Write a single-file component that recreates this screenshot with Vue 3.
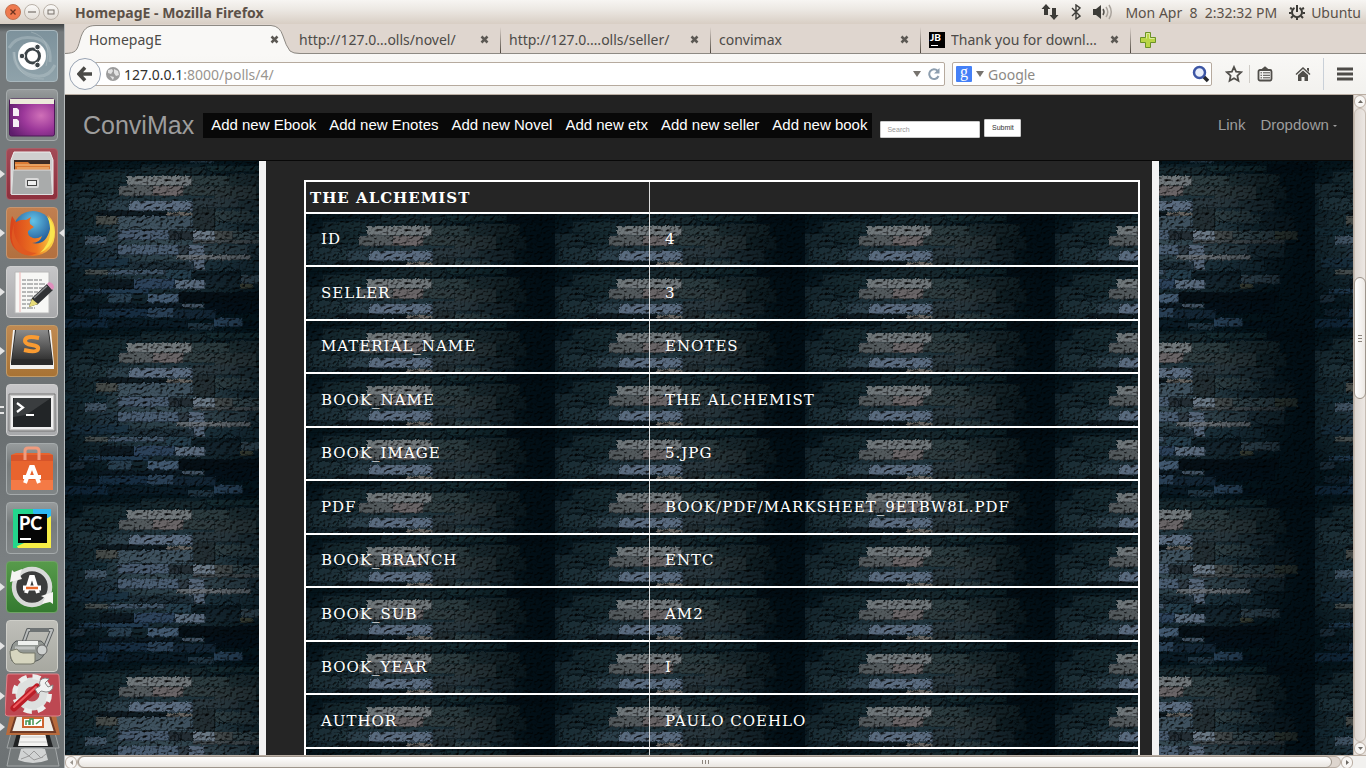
<script setup>
const tabs = [
  { title: 'HomepagE', active: true },
  { title: 'http://127.0…olls/novel/' },
  { title: 'http://127.0.…olls/seller/' },
  { title: 'convimax' },
  { title: 'Thank you for downl…', icon: true },
]

const links = ['Add new Ebook', 'Add new Enotes', 'Add new Novel', 'Add new etx', 'Add new seller', 'Add new book']

const rows = [
  ['ID', '4'],
  ['SELLER', '3'],
  ['MATERIAL_NAME', 'ENOTES'],
  ['BOOK_NAME', 'THE ALCHEMIST'],
  ['BOOK_IMAGE', '5.JPG'],
  ['PDF', 'BOOK/PDF/MARKSHEET_9ETBW8L.PDF'],
  ['BOOK_BRANCH', 'ENTC'],
  ['BOOK_SUB', 'AM2'],
  ['BOOK_YEAR', 'I'],
  ['AUTHOR', 'PAULO COEHLO'],
  ['', ''],
]

// Stones of the wall tile: x, y, width, height, colour
const stones = [
  [0, 0, 76, 5, '#06141a'], [76, 3, 66, 8, '#16262b'], [142, 2, 60, 6, '#14282d'], [202, 0, 48, 9, '#030d13'],
  [18, 8, 44, 11, '#16282e'], [62, 12, 65, 10, '#73787a'], [127, 12, 38, 10, '#2c393c'], [165, 10, 50, 13, '#1d2b2f'],
  [0, 20, 30, 14, '#1a2c33'], [30, 18, 24, 12, '#14262c'], [54, 22, 34, 10, '#55585b'], [88, 22, 30, 10, '#6c6465'], [118, 22, 32, 10, '#2f393c'],
  [150, 22, 42, 14, '#2b3638'], [192, 22, 30, 14, '#162428'],
  [4, 34, 38, 13, '#20323a'], [42, 37, 23, 10, '#293b45'], [65, 37, 63, 10, '#5a6a7e'], [128, 34, 46, 10, '#28343a'], [174, 36, 36, 12, '#1e2d32'],
  [33, 47, 69, 5, '#0a141a'], [102, 48, 26, 4, '#67625d'], [128, 44, 22, 22, '#20292d'], [150, 47, 36, 11, '#2b393d'],
  [3, 52, 9, 11, '#15252b'], [14, 51, 15, 12, '#18292f'], [31, 52, 22, 9, '#484a46'], [53, 52, 75, 14, '#3b4c58'], [166, 50, 30, 10, '#24343a'], [196, 52, 34, 14, '#132127'],
  [0, 64, 42, 8, '#142a34'], [20, 72, 22, 9, '#445666'], [53, 66, 51, 10, '#45566a'], [104, 67, 24, 9, '#20272d'], [128, 67, 22, 9, '#6a7583'], [150, 67, 18, 9, '#434746'],
  [168, 67, 42, 9, '#36454a'], [210, 67, 23, 9, '#434639'], [128, 76, 92, 4, '#42474a'],
  [32, 81, 21, 14, '#1e303c'], [53, 81, 61, 10, '#46586c'], [114, 81, 10, 10, '#29343c'], [124, 81, 16, 25, '#536274'], [140, 81, 45, 10, '#2a3a42'], [185, 80, 35, 14, '#1b2c34'],
  [111, 91, 75, 5, '#62666b'], [65, 97, 64, 9, '#1a2933'], [6, 94, 58, 10, '#182d3c'], [140, 97, 60, 11, '#162932'],
  [20, 106, 23, 5, '#4a504f'], [43, 106, 58, 5, '#405164'], [101, 106, 26, 9, '#223847'], [127, 107, 49, 12, '#0b171e'],
  [34, 115, 35, 10, '#0b151c'], [69, 115, 41, 10, '#2b4058'], [110, 116, 30, 9, '#5b6a7d'], [140, 112, 36, 12, '#13222a'], [176, 111, 39, 9, '#354550'], [175, 120, 13, 5, '#3f4132'],
  [14, 125, 70, 5, '#20374c'], [5, 131, 15, 8, '#1d2d38'], [43, 130, 24, 9, '#283d4e'], [83, 130, 31, 9, '#435870'], [114, 128, 100, 11, '#040c12'],
  [34, 140, 84, 4, '#0b1620'], [118, 140, 21, 4, '#435160'], [140, 138, 70, 12, '#030e16'],
  [10, 145, 24, 8, '#10202c'], [34, 145, 49, 9, '#162b40'], [83, 144, 26, 10, '#2a3f55'], [109, 146, 42, 9, '#132532'],
  [0, 155, 43, 9, '#12273a'], [43, 156, 80, 8, '#0a1a25'], [123, 159, 26, 7, '#203240'], [149, 154, 29, 9, '#284056'], [178, 158, 60, 6, '#03111a'],
]

const cracks = 'M4 36q6 4 3 9M12 35q8-5 18-2t6 8M30 46l6-9M136 4l20 7 12-2M150 52l14 8 10-2M190 54l12 10M168 75l12-8 14 7M108 69q6-2 6 4t-5 2M116 75v-7M40 86l14 6M70 99l10 5 12-6 14 6 12-5M150 112l14-10 12 8M200 22l16 10M20 26l20 4M186 88l14 8 20-2M205 158q10 8 14-6M222 47q8 3 4 8'

const wallSvg = `<svg xmlns="http://www.w3.org/2000/svg" width="250" height="167">
<defs>
<radialGradient id="g" gradientUnits="userSpaceOnUse" cx="0" cy="0" r="1" gradientTransform="translate(98 72) scale(140 88)"><stop offset="0" stop-color="#34464f"/><stop offset=".5" stop-color="#1b2d35"/><stop offset="1" stop-color="#04131a"/></radialGradient>
<linearGradient id="s"><stop offset="0" stop-color="#000a10" stop-opacity=".25"/><stop offset=".2" stop-color="#000a10" stop-opacity="0"/><stop offset=".6" stop-color="#000a10" stop-opacity="0"/><stop offset="1" stop-color="#000a10" stop-opacity=".75"/></linearGradient>
<filter id="r" x="0" y="0" width="100%" height="100%" color-interpolation-filters="sRGB"><feTurbulence type="fractalNoise" baseFrequency=".3 .36" numOctaves="4" seed="7" result="n"/><feDiffuseLighting in="n" surfaceScale="3" diffuseConstant="1.3" lighting-color="#fff" result="l"><feDistantLight azimuth="235" elevation="55"/></feDiffuseLighting><feDisplacementMap in="SourceGraphic" in2="n" scale="3" xChannelSelector="R" yChannelSelector="G" result="d"/><feComposite in="d" in2="l" operator="arithmetic" k1="1.1" k2="0" k3="0" k4="0" result="c"/><feMerge><feMergeNode in="SourceGraphic"/><feMergeNode in="c"/></feMerge></filter>
</defs>
<g filter="url(#r)"><rect width="250" height="167" fill="url(#g)"/>
${stones.map(([x, y, w, h, c]) => `<rect x="${x}" y="${y}" width="${w}" height="${h}" fill="${c}" fill-opacity=".85"/><path d="M${x} ${y + h - 0.5}h${w - 0.5}v-${h}" fill="none" stroke="#000a10" stroke-opacity=".4"/>`).join('')}
<path d="${cracks}" fill="none" stroke="#020b10" stroke-opacity=".8"/><rect width="250" height="167" fill="url(#s)"/></g></svg>`

const wall = `url("data:image/svg+xml,${encodeURIComponent(wallSvg)}")`
</script>

<template>
  <div class="desktop" :style="{ '--wall': wall }">
    <header class="menubar">
      <div class="wm">
        <button class="wm-btn close" aria-label="Close"><svg width="8" height="8" viewBox="0 0 8 8"><path d="M1.500 1.500l5 5m0-5l-5 5" stroke="#6b3320" stroke-width="1.300" /></svg></button>
        <button class="wm-btn" aria-label="Minimize"><svg width="8" height="8" viewBox="0 0 8 8"><path d="M0 4h8" stroke="#77706a" stroke-width="1.200" /></svg></button>
        <button class="wm-btn" aria-label="Maximize"><svg width="8" height="8" viewBox="0 0 8 8"><rect x="1" y="2" width="6" height="4" fill="none" stroke="#77706a" /></svg></button>
      </div>
      <strong class="win-title">HomepagE - Mozilla Firefox</strong>
      <div class="tray">
        <svg width="18" height="18" viewBox="0 0 18 18" fill="#3c3b37"><path d="M5 1l4.500 5H7v6H3V6H.500zM13 17l-4.500-5H11V5h4v7h2.500z" /></svg>
        <svg class="bt" width="10" height="16" viewBox="0 0 10 16"><path d="M1 4l8 8-4 3V1l4 3-8 8" fill="none" stroke="#3c3b37" stroke-width="1.400" /></svg>
        <svg class="vol" width="20" height="16" viewBox="0 0 20 16"><path d="M0 5h3l5-4v14l-5-4H0z" fill="#3c3b37" /><path d="M10 5q2 3 0 6" fill="none" stroke="#55524d" stroke-width="1.500" /><path d="M13 3q3.500 5 0 10M16 1q4.500 7 0 14" fill="none" stroke="#aaa49d" stroke-width="1.500" /></svg>
        <span class="clock">Mon Apr&nbsp; 8&nbsp; 2:32:32 PM</span>
        <svg width="16" height="16" viewBox="0 0 16 16" fill="none" stroke="#3c3b37"><path d="M5.500 3.800a5 5 0 1 0 5 0" stroke-width="2" /><path d="M8 1v7" stroke-width="2" /><path d="M3 5L1 4M2.500 9H0M4 12l-2 2M8 13.500V16M12 12l2 2M13.500 9H16M13 5l2-1" stroke-width="2" /></svg>
        <span>Ubuntu</span>
      </div>
    </header>

    <div class="workspace">
      <nav class="launcher" aria-label="Launcher">
        <button class="tile t-dash" aria-label="Dash">
          <svg viewBox="0 0 52 52"><g fill="none" stroke="#c6d0d4" stroke-opacity=".35"><path d="M3 18Q10 5 28 8T44 32" stroke-width="3" /><path d="M49 35Q42 50 25 45T8 22" stroke-width="3" /><path d="M25 2q22 6 15 34M8 22q2 28 30 27" /></g><circle cx="26" cy="26" r="14" fill="#fff" /><circle cx="26.500" cy="26" r="7" fill="none" stroke="#3c4448" stroke-width="3" /><g fill="#3c4448" stroke="#fff"><circle cx="16" cy="26" r="2.800" /><circle cx="31.500" cy="17" r="2.800" /><circle cx="31.500" cy="35" r="2.800" /></g></svg>
        </button>
        <button class="tile" aria-label="Desktop">
          <svg viewBox="0 0 52 52"><defs><radialGradient id="pur" cx=".7" cy=".45" r=".8"><stop offset="0" stop-color="#d070b8" /><stop offset=".5" stop-color="#9c389a" /><stop offset="1" stop-color="#5e1d6c" /></radialGradient></defs><rect x="3.500" y="10" width="45" height="37" rx="2" fill="url(#pur)" stroke="#4c1857" /><path d="M4 10h44v5H4z" fill="#eceadb" /><path d="M7 19h4l2 2v6H7zM7 30h4l2 2v6H7z" fill="#f6eef5" /></svg>
        </button>
        <button class="tile t-files" aria-label="Files">
          <i class="pip"></i>
          <svg viewBox="0 0 52 52"><path d="M8 4h36l3 8v34H5V12z" fill="#cfcfcf" stroke="#eee" /><path d="M8 12h36v12H8z" fill="#3d2b25" /><path d="M9 14h13l2 2h20v10H9z" fill="#db7a34" /><path d="M9 17h35M11 20h32" stroke="#f6c489" /><path d="M7 22h38l1.500 24.500h-41z" fill="#a9abab" stroke="#dedede" /><rect x="19" y="30" width="14" height="10" rx="2" fill="#dadada" /><rect x="21.500" y="32.500" width="9" height="5" fill="#eee" stroke="#444" /></svg>
        </button>
        <button class="tile t-fox" aria-label="Firefox">
          <i class="pip"></i><i class="pip right"></i>
          <svg viewBox="0 0 52 52"><defs><radialGradient id="globe" cx=".5" cy=".25" r=".7"><stop offset="0" stop-color="#62c3e8" /><stop offset="1" stop-color="#133f83" /></radialGradient><linearGradient id="fox" x1="0" x2="1"><stop offset="0" stop-color="#d8421b" /><stop offset=".6" stop-color="#ee7722" /><stop offset="1" stop-color="#fbe04a" /></linearGradient></defs><circle cx="27" cy="24" r="20" fill="url(#globe)" /><path d="M6 9l4 6q5-3 10-2l5-3q-2 4-1 7l4 3-6 4q-1 5 5 7 5 1 9-2-2 7-10 7 14 3 18-14 1-7-2-14 7 7 7 17 0 22-22 24Q3 47 4 26 4 16 6 9z" fill="url(#fox)" /><path d="M41 9q8 8 7 20-3 12-14 17 9-9 10-18 1-10-3-19z" fill="#fae64f" /><path d="M9 15q-4 12 5 23 7 8 17 8-12 6-21-4-8-10-1-27z" fill="#e05921" /></svg>
        </button>
        <button class="tile t-light" aria-label="Text Editor">
          <i class="pip"></i>
          <svg viewBox="0 0 52 52"><path d="M9 6h34v41H9z" fill="#f7f7f5" stroke="#b8b8b8" /><path d="M14 6v40" stroke="#efb3b3" /><path d="M16 14h20M16 18h24M16 22h21M16 26h22M16 30h17M16 34h18M16 38h16M16 42h13" stroke="#77797b" stroke-width="1" stroke-dasharray="4 1 6 1" /><path d="M23 41l3-9 15-14 6 6-15 14z" fill="#303234" /><path d="M28 32l13-12" stroke="#898c8e" stroke-width="1.500" /><path d="M23 41l3-8 6 5z" fill="#e8dc79" /><path d="M41 18l2-2q5 1 5 6l-2 2z" fill="#df8fbd" /></svg>
        </button>
        <button class="tile t-sublime" aria-label="Sublime Text">
          <i class="pip"></i>
          <svg viewBox="0 0 52 52"><defs><linearGradient id="key" x1="0" y1="0" x2="0" y2="1"><stop offset="0" stop-color="#8b8b8b" /><stop offset="1" stop-color="#343434" /></linearGradient></defs><path d="M7 5h38l3 34v5H4v-5z" fill="#f3f1ee" /><path d="M9 5h34l4 32v3H5v-3z" fill="#2b2b2b" /><path d="M10 5h32l4 29H6z" fill="url(#key)" /><path d="M33 13q-14-3-14 3 0 3 7 4t6 4q-1 4-14 1" fill="none" stroke="#f99b32" stroke-width="4" /></svg>
        </button>
        <button class="tile t-light" aria-label="Terminal">
          <i class="pip double"></i>
          <svg viewBox="0 0 52 52"><path d="M3 10h46v37H3z" fill="#c8c8c8" stroke="#777" /><path d="M5 12h42v33H5z" fill="#efefef" /><path d="M7 14h38v29H7z" fill="#222527" /><path d="M8 14h37L20 31 7 33z" fill="#3a3d3f" /><path d="M11 19l6 4.500-6 4.500M20 31h8" fill="none" stroke="#fff" stroke-width="2.200" /></svg>
        </button>
        <button class="tile" aria-label="Software Center">
          <svg viewBox="0 0 52 52"><path d="M5 12l5-2h33l4 2v35H5z" fill="#e8642e" /><path d="M5 12h42v6H5z" fill="#d6542a" /><path d="M5 37h42v10H5z" fill="#f47a46" /><path d="M19 17V8q0-3 3-3h8q3 0 3 3v9" fill="none" stroke="#ef9b7e" stroke-width="3" /><path d="M19 40l6-16h2l6 16" fill="none" stroke="#fff" stroke-width="4" /><path d="M17 34h18" stroke="#fff" stroke-width="4" /></svg>
        </button>
        <button class="tile" aria-label="PyCharm">
          <svg viewBox="0 0 52 52"><path d="M7 7h22L19 46H7z" fill="#21d789" /><path d="M27 7h18v22L25 9z" fill="#2eb9f3" /><path d="M45 14v32H12l-5-8z" fill="#f7ee45" /><path d="M7 7h20v30L7 46z" fill="#23d58c" /><path d="M12 12h29v29H12z" fill="#050505" /><path d="M14 36h11v2H14z" fill="#fff" /><text x="13" y="28" font-family="Lato, sans-serif" font-size="18" font-weight="900" fill="#fff">PC</text></svg>
        </button>
        <button class="tile t-green" aria-label="Software Updater">
          <i class="pip"></i>
          <svg viewBox="0 0 52 52"><circle cx="26" cy="26" r="18" fill="#3b3d3d" stroke="#d8dad9" stroke-width="4.500" /><path d="M4 21l12-3-2-4 2-6-8 3-2-2zM47 31l-12 4 4 2-3 6 8-2 3 2z" fill="#f4f4f2" /><path d="M20 32l5-16h2l5 16" fill="none" stroke="#fff" stroke-width="4" /><path d="M17 27h18" stroke="#fff" stroke-width="5" /><path d="M20 27h12" stroke="#e8692c" stroke-width="2.500" /></svg>
        </button>
        <button class="tile t-pale" aria-label="Scanner">
          <i class="pip"></i>
          <svg viewBox="0 0 52 52"><path d="M17 24l5-14h24l-9 22" fill="none" stroke="#5c6061" stroke-width="4" stroke-linejoin="round" /><path d="M17 24l5-14h24l-9 22" fill="none" stroke="#b9bcbc" stroke-width="2" stroke-linejoin="round" /><path d="M24 10h19" stroke="#6e7374" stroke-width="4" /><path d="M10 21h25q6 4 4 11t-9 9l-6 2H8q-5-4-3-14 1-6 5-8z" fill="#929793" stroke="#55595a" /><path d="M12 23h20" stroke="#eef0ee" stroke-width="4" /><path d="M9 28h20" stroke="#c0c3c1" stroke-width="3" /><path d="M4 31l7-2q2 4 6 4h12v8q0 3-4 3H9q-5-4-5-13z" fill="#d6d5bf" stroke="#77796b" /><circle cx="36" cy="30" r="5" fill="#cdd0cf" stroke="#666" /></svg>
        </button>
        <div class="stack">
          <i class="pip"></i><i class="pip lower"></i>
          <svg width="56" height="95" viewBox="0 0 56 95"><path d="M6 73h44l4 20H2z" fill="#74797a" stroke="#a4a8a9" /><path d="M16 76q12-5 24 0l3 11q-15 6-30 0z" fill="#d1d3d3" /><path d="M18 78l6 5 5-5 7 7 5-4M16 86l8-3 5 4 9-3" fill="none" stroke="#999" /><path d="M6 60h44l4 15H2z" fill="#6a6f70" stroke="#9fa3a4" /><path d="M12 60h32l4 14H8z" fill="#202223" /><path d="M16 60h24l3 13H13z" fill="#f4f4f2" /><path d="M15 64h26M14 69h28" stroke="#c8c8c6" /><path d="M5 42h46l4 20H1z" fill="#b86b3d" /><path d="M11 43h34l5 16H6z" fill="#f0ede6" stroke="#703b26" stroke-width="2" /><path d="M18 45h20v9H18z" fill="#fff" stroke="#cd6430" stroke-width="2" /><path d="M21 52v-4h3v4m1 0v-6h3v6m3-1l5-4" stroke="#469553" stroke-width="1.500" fill="none" /><path d="M4 1h48q2 0 2 2l2 37q0 3-3 3H3q-3 0-3-3L2 3q0-2 2-2z" fill="#bd4852" stroke="#df858c" /><circle cx="27" cy="21" r="12" fill="none" stroke="#dde0df" stroke-width="9" /><circle cx="27" cy="21" r="17.500" fill="none" stroke="#eceeed" stroke-width="5" stroke-dasharray="8 5.740" /><path d="M9 35l23-21" stroke="#bb1d27" stroke-width="7" stroke-linecap="round" /><path d="M9 34l22-20" stroke="#f05c61" stroke-width="2" stroke-linecap="round" /><path d="M30 16l5-3q-2-7 5-8l4 1-4 4 3 4 5-2q0 7-7 7l-5-1-3 3z" fill="#f1f2f2" stroke="#888" /></svg>
        </div>
      </nav>

      <main class="browser">
        <div class="tabstrip">
          <div v-for="tab in tabs" :key="tab.title" class="tab" :class="{ active: tab.active }">
            <svg v-if="tab.active" class="tab-shape" viewBox="0 0 235 30" aria-hidden="true"><path d="M0 29.500C11 29 12 27 15 16S22 1.500 31 1.500H206Q215 2 218 12T225 27Q228 29.500 235 29.500V31H0z" fill="#f9f8f6" stroke="#8d8983" /></svg>
            <svg v-if="tab.icon" class="fav" width="16" height="16" viewBox="0 0 16 16"><rect width="16" height="16" /><text x="1" y="9" font-family="Lato, sans-serif" font-weight="900" font-size="10" fill="#fff">JB</text><path d="M2 13.500h7" stroke="#fff" /></svg>
            <a class="tab-title" href="#">{{ tab.title }}</a>
            <button class="tab-close" aria-label="Close tab"><svg width="9" height="9" viewBox="0 0 9 9"><path d="M1.500 1.500l6 6m0-6l-6 6" stroke="#5c5954" stroke-width="2.500" /></svg></button>
          </div>
          <button class="plus" aria-label="New tab"><svg width="16" height="16" viewBox="0 0 16 16"><path d="M5.500.5h5v5h5v5h-5v5h-5v-5h-5v-5h5z" fill="#b9d546" stroke="#6b9226" /><path d="M6.500 6.500v-5h3v5h5" fill="none" stroke="#dcea9b" /></svg></button>
        </div>

        <div class="toolbar">
          <button class="back" aria-label="Back"><svg width="16" height="16" viewBox="0 0 16 16"><path d="M8 1.500L2 8l6 6.500M3 8h12" fill="none" stroke="#4a4946" stroke-width="3.500" /></svg></button>
          <div class="urlbar">
            <svg width="14" height="14" viewBox="0 0 14 14"><circle cx="7" cy="7" r="7" fill="#9c9c9c" /><path d="M2 3l4-1 1 2-2 3-3-1zM8 2l4 2 1 4-3 1-2-3zM4 9l4 1-1 3z" fill="#e3e3e3" /></svg>
            <span class="url"><b>127.0.0.1</b>:8000/polls/4/</span>
            <svg width="8" height="6" viewBox="0 0 8 6"><path d="M0 0h8L4 6z" fill="#77736e" /></svg>
            <svg class="reload" width="12" height="12" viewBox="0 0 12 12"><path d="M9.500 2.800A4.800 4.800 0 1 0 10.500 8" fill="none" stroke="#8d9eaf" stroke-width="2" /><path d="M11.500 0v5.500H6z" fill="#8d9eaf" /></svg>
          </div>
          <div class="searchbar">
            <span class="g-logo">g</span>
            <svg width="8" height="6" viewBox="0 0 8 6"><path d="M0 0h8L4 6z" fill="#77736e" /></svg>
            <input class="engine" type="text" placeholder="Google" aria-label="Google search">
            <svg width="18" height="18" viewBox="0 0 18 18"><path d="M11 11l5 5" stroke="#26282c" stroke-width="3.500" /><circle cx="7.500" cy="7.500" r="5.500" fill="#e9effb" stroke="#3d56a5" stroke-width="2.500" /></svg>
          </div>
          <div class="tools">
            <button aria-label="Bookmark"><svg width="18" height="18" viewBox="0 0 18 18"><path d="M9 2l2.100 4.700 5 .5-3.700 3.500 1 5L9 13.200l-4.400 2.500 1-5L1.900 7.200l5-.5z" fill="none" stroke="#504e4a" stroke-width="1.800" /></svg></button>
            <i class="bar short"></i>
            <button class="list" aria-label="Bookmarks list"><svg width="16" height="16" viewBox="0 0 16 16" fill="none" stroke="#504e4a"><rect x="1.500" y="4" width="13" height="10.500" rx="1.500" stroke-width="1.800" /><path d="M5 4l3-2.500L11 4" stroke-width="2" /><path d="M3.500 6.800h1.500M6 6.800h7M3.500 9.300h1.500M6 9.300h7M3.500 11.800h1.500M6 11.800h7" stroke-width="1" /></svg></button>
            <button class="home" aria-label="Home"><svg width="16" height="16" viewBox="0 0 16 16"><path d="M8 1l7.500 7-1 1L8 3 1.500 9l-1-1zM12 2h2v4l-2-2zM3 9l5-4.500L13 9v6H9.500v-4h-3v4H3z" fill="#504e4a" /></svg></button>
            <i class="bar"></i>
            <button aria-label="Menu"><svg width="16" height="14" viewBox="0 0 16 14"><path d="M0 2h16M0 7h16M0 12h16" stroke="#4d4b48" stroke-width="3" /></svg></button>
          </div>
        </div>

        <div class="view">
          <div class="page">
            <nav class="navbar">
              <a class="brand" href="#">ConviMax</a>
              <div class="links"><a v-for="l in links" :key="l" href="#">{{ l }}</a></div>
              <form class="find" @submit.prevent>
                <input type="text" placeholder="Search" aria-label="Search">
                <button>Submit</button>
              </form>
              <div class="side"><a href="#">Link</a><a href="#">Dropdown <i class="caret"></i></a></div>
            </nav>
            <div class="wall">
              <section class="panel">
                <table>
                  <thead><tr><th>THE ALCHEMIST</th><th></th></tr></thead>
                  <tbody>
                    <tr v-for="row in rows" :key="row[0]"><td>{{ row[0] }}</td><td>{{ row[1] }}</td></tr>
                  </tbody>
                </table>
              </section>
            </div>
          </div>
          <div class="vscroll" aria-hidden="true">
            <span class="cap"><svg width="5" height="3" viewBox="0 0 5 3"><path d="M0 3h5L2.500 0z" fill="#6b6762" /></svg></span>
            <div class="vtrack"><div class="vthumb"><i></i></div></div>
            <span class="cap"><svg width="5" height="3" viewBox="0 0 5 3"><path d="M0 0h5L2.500 3z" fill="#6b6762" /></svg></span>
          </div>
        </div>
        <div class="hscroll" aria-hidden="true">
          <span class="cap"><svg width="3" height="5" viewBox="0 0 3 5"><path d="M3 0v5L0 2.500z" fill="#9b968f" /></svg></span>
          <div class="htrack"><div class="hthumb"><i></i></div></div>
          <span class="cap"><svg width="3" height="5" viewBox="0 0 3 5"><path d="M0 0v5l3-2.500z" fill="#6b6762" /></svg></span>
        </div>
      </main>
    </div>
  </div>
</template>

<style>
body { margin: 0; overflow: hidden; }
</style>

<style scoped>
* { box-sizing: border-box; }
button { padding: 0; border: 0; background: none; font: inherit; color: inherit; }
a { color: inherit; text-decoration: none; }
svg { display: block; flex: none; }
.desktop { height: 100vh; display: flex; flex-direction: column; font-family: "Noto Sans", sans-serif; font-size: 14px; color: #4c4a47; }

.menubar { flex: none; height: 24px; display: flex; align-items: center; padding: 0 5px; background: linear-gradient(#f7f5f2, #ece8e3 40%, #d8cec4); }
.wm { display: flex; gap: 3px; width: 70px; }
.wm-btn { width: 16px; height: 16px; border-radius: 50%; border: 1px solid #b9b1a8; background: linear-gradient(#fbfaf8, #e2dcd5); display: grid; place-items: center; }
.wm-btn.close { background: #ef7a4f; border-color: #c4714f; }
.win-title { font-size: 14px; color: #5c5148; }
.tray { margin-left: auto; display: flex; align-items: center; color: #5a5149; }
.bt { margin-left: 12px; }
.vol { margin-left: 12px; }
.clock { margin: 0 12px; }
.tray span:last-child { margin-left: 6px; }

.workspace { flex: 1; min-height: 0; display: flex; }
.launcher { flex: none; width: 65px; padding: 6px 0 0 6px; display: flex; flex-direction: column; gap: 7px; overflow: hidden; border-right: 1px solid #b7babb; background: linear-gradient(#3f4244, #757a7c 8px, #757a7c 30%, #6a6f71 55%, #7d8284 75%, #6c7173); }
.tile { position: relative; flex: none; width: 52px; height: 52px; border-radius: 4px; border: 1px solid #a5aaab; background: linear-gradient(#979b9c, #757a7b 40%, #808586); }
.tile svg { width: 52px; height: 52px; margin: -1px; }
.t-dash { background: linear-gradient(#7d929c, #8fa2aa); border-color: #a9b8be; }
.t-files { background: linear-gradient(#a34a56, #8d303d); border-color: #a85e67; }
.t-fox { background: linear-gradient(#c17f50, #b2703f); border-color: #c69570; }
.t-sublime { background: linear-gradient(#c08a52, #a87335); border-color: #c39b68; }
.t-light { background: linear-gradient(#c6c6c8, #a8a9ab); border-color: #cecece; }
.t-green { background: linear-gradient(#579a4b, #347a30); border-color: #6fa365; }
.t-pale { background: linear-gradient(#bfbfb9, #a7a8a0); border-color: #ceceC8; }
.pip { position: absolute; left: -7px; top: 21px; border: 4px solid transparent; border-left: 5px solid #e4e4e4; border-right: 0; }
.pip.right { left: auto; right: -7px; border-left: 0; border-right: 5px solid #e4e4e4; }
.pip.double { border: 0; width: 4px; height: 8px; border-top: 2px solid #e4e4e4; border-bottom: 2px solid #e4e4e4; }
.stack { position: relative; flex: none; margin: -6px 0 0 -1px; }
.stack .pip { left: -5px; top: 19px; }
.stack .pip.lower { top: 50px; }

.browser { flex: 1; min-width: 0; display: flex; flex-direction: column; }
.tabstrip { flex: none; height: 30px; display: flex; padding-left: 15px; background: #dfd6cf; border-bottom: 1px solid #8d8983; }
.tab { position: relative; width: 210px; display: flex; align-items: center; padding: 2px 11px 0 9px; color: #4c4a47; }
.tab::after { content: ""; position: absolute; right: -1px; top: 3px; bottom: 0; width: 1px; background: linear-gradient(#dfd6cf, #4d463e); }
.tab.active::after { display: none; }
.tab-shape { position: absolute; left: -15px; top: 0; width: 235px; height: 30px; }
.tab-title { position: relative; flex: 1; white-space: nowrap; overflow: hidden; }
.tab-close { position: relative; }
.fav { margin-right: 6px; }
.plus { margin: 2px 0 0 10px; }

.toolbar { flex: none; height: 41px; display: flex; align-items: center; padding: 0 13px 0 4px; background: linear-gradient(#f9f8f6, #f2f1ee); border-bottom: 1px solid #b9ada2; }
.back { position: relative; z-index: 1; width: 32px; height: 32px; border-radius: 50%; border: 1px solid #98a3b3; background: #fbfaf9; display: grid; place-items: center; }
.urlbar, .searchbar { height: 24px; border: 1px solid #b6aa9e; border-radius: 2px; background: #fff; display: flex; align-items: center; }
.urlbar { flex: 1; margin-left: -12px; padding: 0 4px 0 16px; }
.url { flex: 1; margin-left: 4px; color: #99958f; }
.url b { font-weight: 400; color: #32302d; }
.reload { margin-left: 7px; }
.searchbar { width: 260px; margin-left: 7px; padding: 0 1px 0 3px; gap: 4px; }
.g-logo { width: 16px; height: 16px; border-radius: 1px; background: #4480f7; color: #fff; font: 16px/12px "Liberation Serif", serif; text-align: center; }
.engine { flex: 1; min-width: 0; border: 0; padding: 0; background: none; font: inherit; outline: 0; }
.engine::placeholder { color: #8c8985; opacity: 1; }
.tools { display: flex; align-items: center; margin-left: 13px; }
.bar { width: 1px; height: 32px; background: #c9d0d8; margin: 0 13px 0 12px; }
.bar.short { height: 18px; margin: 0 7px 0 6px; background: #cfccc7; }
.home { margin-left: 22px; }

.view { flex: 1; min-height: 0; display: flex; }
.page { flex: 1; min-width: 0; display: flex; flex-direction: column; overflow: hidden; }
.navbar { flex: none; height: 66px; display: flex; align-items: flex-start; padding: 18px 16px 0 18px; background: #222; border-bottom: 1px solid #080808; font: 15px/24px "Liberation Sans", Arial, sans-serif; color: #9d9d9d; }
.brand { font-size: 25px; margin-right: 9px; }
.links { height: 25px; padding: 0 5px 0 8px; display: flex; gap: 13px; background: #080808; color: #fff; white-space: nowrap; }
.find { display: flex; align-items: flex-start; gap: 4px; margin: 6px 0 0 8px; font-size: 7px; line-height: 8px; }
.find input { width: 100px; height: 17px; margin-top: 2px; padding: 0 6px; border: 1px solid #ccc; border-radius: 1px; background: #fff; font: inherit; color: #333; }
.find input::placeholder { color: #999; opacity: 1; }
.find button { width: 37px; height: 18px; border: 1px solid #ccc; border-radius: 1px; background: #fff; color: #333; }
.side { margin-left: auto; display: flex; gap: 15px; white-space: nowrap; }
.caret { display: inline-block; vertical-align: middle; border: 2px solid transparent; border-top-color: #9d9d9d; border-bottom: 0; }
.wall { flex: 1; min-height: 0; overflow: hidden; background: var(--wall) 0 3px; }
.panel { max-width: 900px; min-height: 100%; margin: 0 auto; padding: 19px 12px 0 38px; background: #252525; border: solid #f2f2f2; border-width: 0 7px; }
table { width: 100%; table-layout: fixed; border-collapse: separate; border-spacing: 0; font: 15px/21px "DejaVu Serif", serif; letter-spacing: 1px; color: #fff; border: 2px solid #fff; }
th, td { text-align: left; border-bottom: 2px solid #fff; }
th:first-child, td:first-child { width: 344px; border-right: 1px solid #ddd; }
th { height: 32px; padding: 2px 4px 0; }
td { height: 53px; padding: 0 15px; }
tbody tr { background: var(--wall) -1px 0; }
tbody tr:nth-child(even) td { height: 54px; }

.vscroll { flex: none; width: 13px; display: flex; flex-direction: column; background: #e6e0db; border-left: 1px solid #b9ada2; }
.vtrack { flex: 1; display: flex; flex-direction: column; border: 1px solid #c6bcb2; border-radius: 6px; background: linear-gradient(90deg, #ded7d1, #ece7e3); padding-top: 168px; }
.cap { flex: none; min-width: 12px; min-height: 13px; display: grid; place-items: center; border: 1px solid #b9ada2; border-radius: 6px; background: #f8f6f4; }
.vthumb { height: 122px; margin: 0 -1px; display: grid; place-items: center; border: 1px solid #9d948a; border-radius: 6px; background: linear-gradient(90deg, #fff, #ece8e4); }
.vthumb i { width: 4px; height: 7px; background: repeating-linear-gradient(#8c857d 0 1px, transparent 1px 3px); }
.hscroll { flex: none; height: 13px; display: flex; padding-right: 13px; background: #f2f1ef; border-top: 1px solid #b9ada2; }
.htrack { flex: 1; display: flex; border: 1px solid #b9ada2; border-radius: 6px; background: #ddd5ce; padding-right: 8px; }
.hthumb { flex: 1; margin: -1px 0; display: grid; place-items: center; border: 1px solid #9d948a; border-radius: 6px; background: linear-gradient(#fff, #e9e5e0); }
.hthumb i { width: 7px; height: 4px; background: repeating-linear-gradient(90deg, #8c857d 0 1px, transparent 1px 3px); }
</style>
